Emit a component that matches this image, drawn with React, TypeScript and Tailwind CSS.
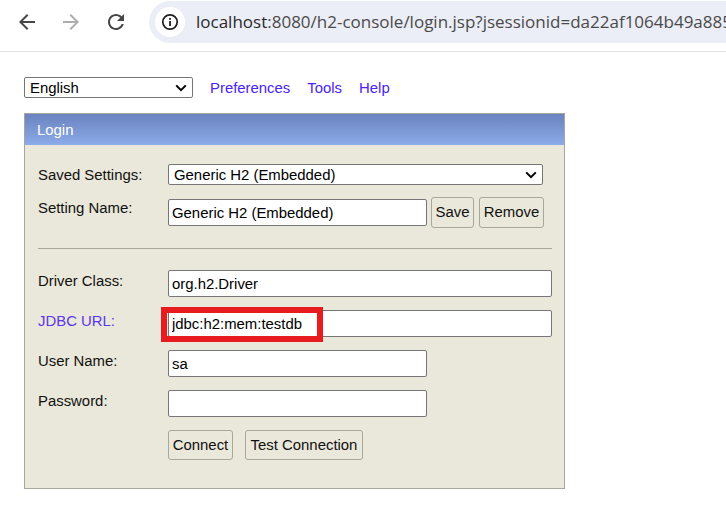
function Chevron({ className }: { className: string }) {
  return (
    <svg className={className} width="12" height="8" viewBox="0 0 12 8" fill="none">
      <path d="M1.2 1.4 6 6.2l4.8-4.8" stroke="#000" strokeWidth="2" />
    </svg>
  );
}

export default function App() {
  const inputBase = "h-[27px] rounded-[2px] border border-[#767676] bg-white px-[3px] text-[14.9px] text-black outline-none";
  const selectBase = "block h-[21px] appearance-none rounded-[2px] border border-[#767676] bg-white pl-[5px] pt-[2px] text-[14.9px] leading-[17px] text-black outline-none";
  const btn = "rounded-[3px] border border-[#a9a799] bg-[#eae8da] text-[14.9px] text-[#111] font-['Liberation_Sans',Arial,sans-serif]";
  const label = "w-[130px] shrink-0 text-[14.9px] leading-[17px] text-[#111]";
  return (
    <div className="h-[512px] w-[726px] overflow-hidden bg-white font-['Liberation_Sans',Arial,sans-serif]">
      <div className="flex h-[52px] items-start border-b border-[#e3e3e3] pt-px">
        <div className="flex h-[42px] w-[149px] items-center pl-[15px]">
          <svg width="24" height="24" viewBox="0 0 24 24" fill="#474747"><path d="M20 11H7.83l5.59-5.59L12 4l-8 8 8 8 1.41-1.41L7.83 13H20v-2z" /></svg>
          <svg className="ml-[20px]" width="24" height="24" viewBox="0 0 24 24" fill="#adadad"><path d="M4 11h12.17l-5.59-5.59L12 4l8 8-8 8-1.41-1.41L16.17 13H4v-2z" /></svg>
          <svg className="ml-[21px]" width="24" height="24" viewBox="0 0 24 24" fill="#474747"><path d="M17.65 6.35C16.2 4.9 14.21 4 12 4c-4.42 0-7.99 3.58-7.99 8s3.57 8 7.99 8c3.73 0 6.84-2.55 7.73-6h-2.08c-.82 2.33-3.04 4-5.65 4-3.31 0-6-2.69-6-6s2.69-6 6-6c1.66 0 3.14.69 4.22 1.78L13 11h7V4l-2.35 2.35z" /></svg>
        </div>
        <div className="flex h-[42px] min-w-0 flex-1 items-center overflow-hidden rounded-l-[21px] bg-[#ebeef6] pl-[6px]">
          <div className="flex h-[30px] w-[30px] shrink-0 items-center justify-center rounded-full bg-white">
            <svg width="18" height="18" viewBox="0 0 18 18">
              <circle cx="9" cy="9" r="7.2" fill="none" stroke="#1f1f1f" strokeWidth="1.7" />
              <rect x="8.1" y="8" width="1.8" height="5" fill="#1f1f1f" />
              <rect x="8.1" y="5" width="1.8" height="1.8" fill="#1f1f1f" />
            </svg>
          </div>
          <span className="ml-[11px] whitespace-nowrap font-['Open_Sans',sans-serif] text-[17px] text-[#4a4a4a]">
            <span className="text-[#2a2a2a]">localhost</span>:8080/h2-console/login.jsp?jsessionid=da22af1064b49a885
          </span>
        </div>
      </div>

      <div className="pl-[24px] pt-[25px]">
        <div className="flex h-[21px] items-center">
          <div className="relative">
            <select className={selectBase + " w-[169px]"}>
              <option>English</option>
            </select>
            <Chevron className="pointer-events-none absolute right-[6px] top-[7px]" />
          </div>
          <a className="ml-[17px] pt-[1px] text-[14.9px] text-[#4a24f5]">Preferences</a>
          <a className="ml-[17px] pt-[1px] text-[14.9px] text-[#4a24f5]">Tools</a>
          <a className="ml-[17px] pt-[1px] text-[14.9px] text-[#4a24f5]">Help</a>
        </div>

        <div className="mt-[15px] h-[376px] w-[541px] border border-[#a8a69a] bg-[#eae8da]">
          <div className="flex h-[31px] items-center bg-gradient-to-b from-[#6a83bf] to-[#8cabe9] pl-[12px] pt-[1px] text-[14.9px] text-white">
            Login
          </div>
          <div className="pl-[13px] pt-[19px]">
            <div className="flex h-[21px] items-center">
              <div className={label + " pt-[1px]"}>Saved Settings:</div>
              <div className="relative">
                <select className={selectBase + " w-[375px]"}>
                  <option>Generic H2 (Embedded)</option>
                </select>
                <Chevron className="pointer-events-none absolute right-[6px] top-[7px]" />
              </div>
            </div>
            <div className="mt-[12px] flex h-[31px] items-start">
              <div className={label + " pt-[3px]"}>Setting Name:</div>
              <input readOnly value="Generic H2 (Embedded)" className={inputBase + " mt-[2px] w-[259px]"} />
              <button className={btn + " ml-[4px] h-[31px] w-[43px]"}>Save</button>
              <button className={btn + " ml-[5px] h-[31px] w-[65px]"}>Remove</button>
            </div>
            <div className="mt-[20px] h-px w-[514px] bg-[#a8a69a]" />
            <div className="mt-[21px] flex h-[27px] items-start">
              <div className={label + " pt-[3px]"}>Driver Class:</div>
              <input readOnly value="org.h2.Driver" className={inputBase + " w-[384px]"} />
            </div>
            <div className="mt-[13px] flex h-[27px] items-start">
              <a className={label + " pt-[3px] !text-[#5a37ea]"}>JDBC URL:</a>
              <div className="relative">
                <input readOnly value="jdbc:h2:mem:testdb" className={inputBase + " w-[384px]"} />
                <div className="absolute left-[-7px] top-[-3px] h-[35px] w-[162px] border-[6px] border-[#e81c1f]" />
              </div>
            </div>
            <div className="mt-[13px] flex h-[27px] items-start">
              <div className={label + " pt-[3px]"}>User Name:</div>
              <input readOnly value="sa" className={inputBase + " w-[259px]"} />
            </div>
            <div className="mt-[13px] flex h-[27px] items-start">
              <div className={label + " pt-[3px]"}>Password:</div>
              <input readOnly value="" className={inputBase + " w-[259px]"} />
            </div>
            <div className="ml-[130px] mt-[13px] flex">
              <button className={btn + " h-[30px] w-[65px] pt-[1px]"}>Connect</button>
              <button className={btn + " ml-[12px] h-[30px] w-[118px] pt-[1px]"}>Test Connection</button>
            </div>
          </div>
        </div>
      </div>
    </div>
  );
}
